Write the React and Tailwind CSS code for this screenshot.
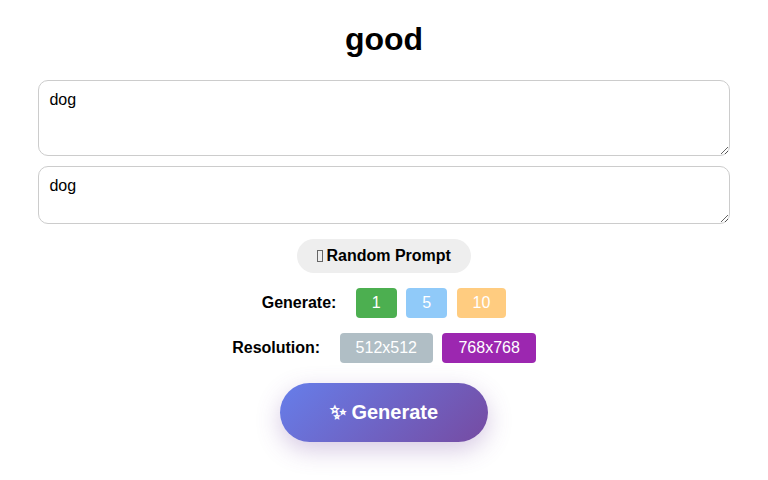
const btn = "h-[30px] px-4 rounded-[4px] text-base leading-[18px] text-white shrink-0";

export default function App() {
  return (
    <div className="px-[38.4px] pt-[21px] font-['Liberation_Sans',Arial,sans-serif] text-black bg-white min-h-[480px]">
      <h1 className="text-[32px] leading-[37px] font-bold text-center mb-[22px]">good</h1>
      <div className="flex flex-col gap-[10px]">
        <textarea
          defaultValue="dog"
          className="block w-full h-[76px] border border-[#ccc] rounded-[10px] p-[10px] text-base leading-[18px] outline-none"
        />
        <textarea
          defaultValue="dog"
          className="block w-full h-[58px] border border-[#ccc] rounded-[10px] p-[10px] text-base leading-[18px] outline-none"
        />
      </div>
      <div className="flex justify-center mt-[15px]">
        <button className="h-[34px] px-5 rounded-[20px] bg-[#eee] text-base leading-[18px] font-bold text-black">
          <span className="inline-block w-[6px] h-[12px] mr-[-1px] align-[-1px] border border-[#666]" /> Random Prompt
        </button>
      </div>
      <div className="flex justify-center items-center gap-[9.45px] mt-[15px]">
        <span className="font-bold text-base mr-[10px]">Generate:</span>
        <button className={`${btn} bg-[#4caf50]`}>1</button>
        <button className={`${btn} bg-[#90caf9]`}>5</button>
        <button className={`${btn} bg-[#ffcc80]`}>10</button>
      </div>
      <div className="flex justify-center items-center gap-[9.45px] mt-[15px]">
        <span className="font-bold text-base mr-[10px]">Resolution:</span>
        <button className={`${btn} bg-[#b0bec5]`}>512x512</button>
        <button className={`${btn} bg-[#9c27b0]`}>768x768</button>
      </div>
      <div className="flex justify-center mt-5">
        <button className="h-[59px] px-[50px] rounded-[30px] text-xl leading-[23px] font-bold text-white bg-[linear-gradient(135deg,#667eea,#764ba2)] shadow-[0_8px_24px_rgba(118,75,162,0.3)]">
          <span className="font-['DejaVu_Sans',sans-serif]">{"\u2728\uFE0E"}</span> Generate
        </button>
      </div>
    </div>
  );
}
